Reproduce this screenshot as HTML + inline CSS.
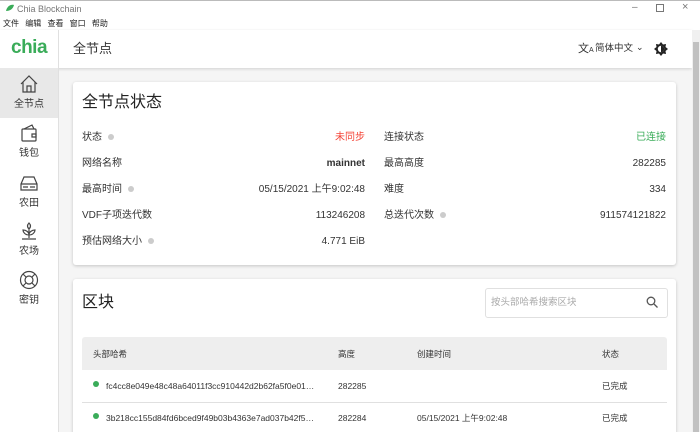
<!DOCTYPE html>
<html><head><meta charset="utf-8"><style>
*{margin:0;padding:0;box-sizing:border-box}
html,body{width:700px;height:432px;overflow:hidden}
body{background:#f5f5f5;font-family:"Liberation Sans","Noto Sans CJK SC",sans-serif;color:#222;position:relative}
.a{position:absolute;white-space:nowrap;line-height:12px}
.lbl{font-size:10px;color:#333}
.val{font-size:10px;color:#333;text-align:right}
.dot{display:inline-block;width:6px;height:6px;border-radius:50%;background:#ccc;margin-left:6px;vertical-align:middle}
.card{position:absolute;background:#fff;border-radius:3px;box-shadow:0 1px 3px rgba(0,0,0,.2)}
.nav{position:absolute;left:0;width:58px;text-align:center;font-size:10px;color:#333;line-height:13px}
.nav svg{display:block;margin:0 auto}
</style></head><body>
<div class="a" style="left:0;top:0;width:700px;height:32px;background:#fff"></div>
<div class="a" style="left:0;top:0;width:700px;height:1px;background:#bbb"></div>
<svg class="a" style="left:5px;top:4px" width="10" height="8" viewBox="0 0 10 8"><path d="M1 7 C2 2 6 0 9 1 C8 5 5 7 1 7Z" fill="#3aac59"/></svg>
<div class="a" style="left:17px;top:3px;font-size:9px;color:#777">Chia Blockchain</div>
<div class="a" style="left:632px;top:2px;font-size:10px;color:#777">–</div>
<div class="a" style="left:656px;top:4px;width:8px;height:8px;border:1px solid #777"></div>
<div class="a" style="left:682px;top:1px;font-size:11px;color:#777">×</div>
<div class="a" style="left:3px;top:18px;font-size:8px;color:#222;word-spacing:4px">文件 编辑 查看 窗口 帮助</div>
<div class="a" style="left:0;top:30px;width:692px;height:38px;background:#fff;box-shadow:0 1px 3px rgba(0,0,0,.15)"></div>
<div class="a" style="left:11px;top:38px;font-size:19px;line-height:20px;font-weight:bold;color:#3aac59;letter-spacing:-0.5px">chia</div>
<div class="a" style="left:58px;top:30px;width:1px;height:402px;background:#e0e0e0"></div>
<div class="a" style="left:73px;top:41px;font-size:13px;line-height:16px;color:#333">全节点</div>
<div class="a" style="left:578px;top:43px;font-size:11px;color:#333">文<span style="font-size:7px">A</span></div>
<div class="a" style="left:595px;top:43px;font-size:9.5px;color:#333">简体中文</div>
<div class="a" style="left:636px;top:41px;font-size:9px;color:#333">⌄</div>
<svg class="a" style="left:654px;top:42px" width="14" height="14" viewBox="0 0 14 14"><polygon points="7,0 9,2.5 12,2 11.5,5 14,7 11.5,9 12,12 9,11.5 7,14 5,11.5 2,12 2.5,9 0,7 2.5,5 2,2 5,2.5" fill="#222"/><circle cx="7" cy="7" r="3.2" fill="#fff"/><path d="M7 3.8 A3.2 3.2 0 0 1 7 10.2Z" fill="#222"/></svg>
<div class="a" style="left:692px;top:30px;width:8px;height:402px;background:#f0f0f0"></div>
<div class="a" style="left:693px;top:42px;width:6px;height:390px;background:#c1c1c1"></div>
<div class="a" style="left:0;top:68px;width:58px;height:364px;background:#fff"></div>
<div class="a" style="left:0;top:68px;width:58px;height:50px;background:#e8e8e8"></div>
<div class="nav" style="top:74px"><svg width="20" height="20" viewBox="0 0 20 20" fill="none" stroke="#444" stroke-width="1.2"><path d="M2 10 L10 2 L18 10 M4 8 V18 H16 V8 M8 18 V12 H12 V18"/></svg><div style="margin-top:4px">全节点</div></div>
<div class="nav" style="top:123px"><svg width="20" height="20" viewBox="0 0 20 20" fill="none" stroke="#444" stroke-width="1.2"><rect x="3" y="6" width="14" height="12" rx="1"/><path d="M5 6 L13 2 L15 6 M13 11 H17 V14 H13Z"/></svg><div style="margin-top:4px">钱包</div></div>
<div class="nav" style="top:173px"><svg width="20" height="20" viewBox="0 0 20 20" fill="none" stroke="#444" stroke-width="1.2"><path d="M5 4 H15 L18 11 V17 H2 V11 Z M2 11 H18 M4 14 H9 M11 14 H16"/></svg><div style="margin-top:4px">农田</div></div>
<div class="nav" style="top:221px"><svg width="20" height="20" viewBox="0 0 20 20" fill="none" stroke="#444" stroke-width="1.2"><path d="M10 2 C8 4 8 6 10 8 C12 6 12 4 10 2Z M10 8 V17 M10 14 C6 14 4 11 4 9 C7 9 10 11 10 14 C10 11 13 9 16 9 C16 11 14 14 10 14 M3 18 H17"/></svg><div style="margin-top:4px">农场</div></div>
<div class="nav" style="top:270px"><svg width="20" height="20" viewBox="0 0 20 20" fill="none" stroke="#444" stroke-width="1.2"><circle cx="10" cy="10" r="8.5"/><circle cx="10" cy="10" r="4"/><path d="M4 4 L7 7 M16 4 L13 7 M4 16 L7 13 M16 16 L13 13"/></svg><div style="margin-top:4px">密钥</div></div>
<div class="card" style="left:73px;top:82px;width:603px;height:183px"></div>
<div class="a" style="left:82px;top:93px;font-size:16px;line-height:20px;color:#222">全节点状态</div>
<div class="a lbl" style="left:82px;top:132px">状态<span class="dot"></span></div>
<div class="a lbl" style="left:82px;top:158px">网络名称</div>
<div class="a lbl" style="left:82px;top:184px">最高时间<span class="dot"></span></div>
<div class="a lbl" style="left:82px;top:210px">VDF子项迭代数</div>
<div class="a lbl" style="left:82px;top:236px">预估网络大小<span class="dot"></span></div>
<div class="a val" style="right:335px;top:132px;color:#f44336">未同步</div>
<div class="a val" style="right:335px;top:158px;font-weight:bold">mainnet</div>
<div class="a val" style="right:335px;top:184px">05/15/2021 上午9:02:48</div>
<div class="a val" style="right:335px;top:210px">113246208</div>
<div class="a val" style="right:335px;top:236px">4.771 EiB</div>
<div class="a lbl" style="left:384px;top:132px">连接状态</div>
<div class="a lbl" style="left:384px;top:158px">最高高度</div>
<div class="a lbl" style="left:384px;top:184px">难度</div>
<div class="a lbl" style="left:384px;top:210px">总迭代次数<span class="dot"></span></div>
<div class="a val" style="right:34px;top:132px;color:#3aac59">已连接</div>
<div class="a val" style="right:34px;top:158px">282285</div>
<div class="a val" style="right:34px;top:184px">334</div>
<div class="a val" style="right:34px;top:210px">911574121822</div>
<div class="card" style="left:73px;top:279px;width:603px;height:160px"></div>
<div class="a" style="left:82px;top:293px;font-size:16px;line-height:20px;color:#222">区块</div>
<div class="a" style="left:485px;top:288px;width:183px;height:30px;border:1px solid #e0e0e0;border-radius:3px"></div>
<div class="a" style="left:491px;top:297px;font-size:9.5px;color:#aaa">按头部哈希搜索区块</div>
<svg class="a" style="left:646px;top:296px" width="12" height="12" viewBox="0 0 12 12" fill="none" stroke="#555" stroke-width="1.3"><circle cx="5" cy="5" r="3.8"/><path d="M8 8 L11.5 11.5"/></svg>
<div class="a" style="left:82px;top:337px;width:585px;height:33px;background:#eee;border-radius:3px 3px 0 0"></div>
<div class="a" style="left:82px;top:370px;width:585px;height:62px;background:#fff"></div>
<div class="a" style="left:82px;top:402px;width:585px;height:1px;background:#e0e0e0"></div>
<div class="a" style="left:93px;top:348px;font-size:8.5px;color:#333">头部哈希</div>
<div class="a" style="left:338px;top:348px;font-size:8.5px;color:#333">高度</div>
<div class="a" style="left:417px;top:348px;font-size:8.5px;color:#333">创建时间</div>
<div class="a" style="left:602px;top:348px;font-size:8.5px;color:#333">状态</div>
<div class="a" style="left:93px;top:381px;width:6px;height:6px;border-radius:50%;background:#3aac59"></div>
<div class="a" style="left:106px;top:380px;font-size:8.5px;color:#333">fc4cc8e049e48c48a64011f3cc910442d2b62fa5f0e01…</div>
<div class="a" style="left:338px;top:380px;font-size:8.5px;color:#333">282285</div>
<div class="a" style="left:602px;top:380px;font-size:8.5px;color:#333">已完成</div>
<div class="a" style="left:93px;top:413px;width:6px;height:6px;border-radius:50%;background:#3aac59"></div>
<div class="a" style="left:106px;top:412px;font-size:8.5px;color:#333">3b218cc155d84fd6bced9f49b03b4363e7ad037b42f5…</div>
<div class="a" style="left:338px;top:412px;font-size:8.5px;color:#333">282284</div>
<div class="a" style="left:417px;top:412px;font-size:8.5px;color:#333">05/15/2021 上午9:02:48</div>
<div class="a" style="left:602px;top:412px;font-size:8.5px;color:#333">已完成</div>
</body></html>
